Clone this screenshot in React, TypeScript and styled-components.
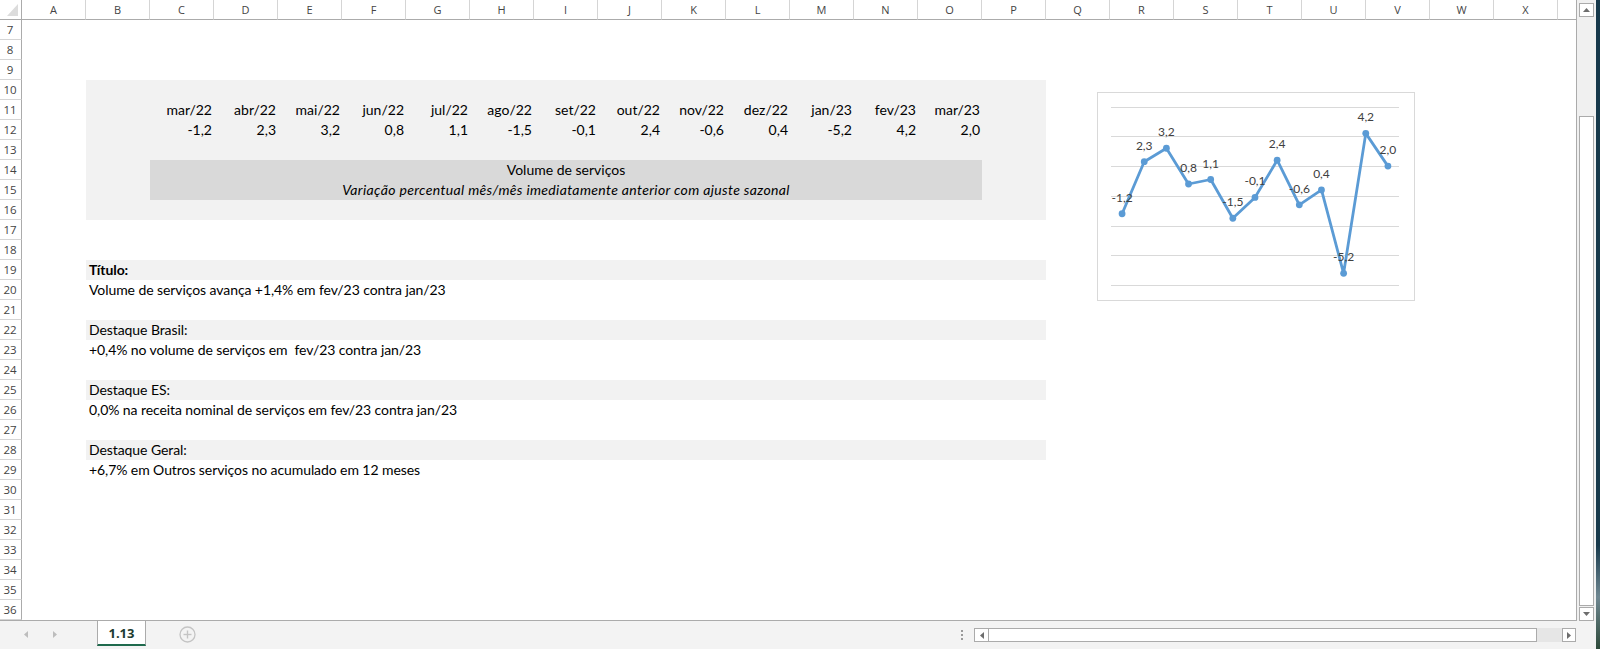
import React from "react";
import styled, { createGlobalStyle } from "styled-components";

const GlobalStyle = createGlobalStyle`
  html, body { margin: 0; padding: 0; background: #fff; }
  body { width: 1600px; height: 649px; overflow: hidden; font-family: "Lato", "Liberation Sans", sans-serif; }
  * { box-sizing: border-box; }
`;

const COLS = "ABCDEFGHIJKLMNOPQRSTUVWX".split("");
const ROWS = Array.from({ length: 30 }, (_, i) => i + 7);
const MONTHS = ["mar/22", "abr/22", "mai/22", "jun/22", "jul/22", "ago/22", "set/22", "out/22", "nov/22", "dez/22", "jan/23", "fev/23", "mar/23"];
const VALUES = [-1.2, 2.3, 3.2, 0.8, 1.1, -1.5, -0.1, 2.4, -0.6, 0.4, -5.2, 4.2, 2.0];
const fmt = (v: number) => v.toFixed(1).replace(".", ",");

const LINES: { row: number; text: string; shaded?: boolean; bold?: boolean }[] = [
  { row: 19, text: "Título:", shaded: true, bold: true },
  { row: 20, text: "Volume de serviços avança +1,4% em fev/23 contra jan/23" },
  { row: 22, text: "Destaque Brasil:", shaded: true },
  { row: 23, text: "+0,4% no volume de serviços em  fev/23 contra jan/23" },
  { row: 25, text: "Destaque ES:", shaded: true },
  { row: 26, text: "0,0% na receita nominal de serviços em fev/23 contra jan/23" },
  { row: 28, text: "Destaque Geral:", shaded: true },
  { row: 29, text: "+6,7% em Outros serviços no acumulado em 12 meses" },
];

const CELL_FONT = `"Lato", "Liberation Sans", sans-serif`;
const UI_FONT = `"Open Sans", "Noto Sans", sans-serif`;

const Screen = styled.div`
  display: flex;
  width: 1600px;
  height: 649px;
`;

const Window = styled.div`
  flex: 0 0 1596px;
  display: flex;
  flex-direction: column;
  background: #f3f3f3;
`;

const Desktop = styled.div`
  flex: 1;
  background: linear-gradient(to bottom, #17394b 0%, #17394b 84%, #6f8791 92%, #2e4a3a 100%);
`;

const Main = styled.div`
  display: flex;
  height: 621px;
`;

const Sheet = styled.div`
  position: relative;
  width: 1577px;
  height: 621px;
  background: #fff;
  border-right: 1px solid #ababab;
  border-bottom: 1px solid #ababab;
  display: grid;
  grid-template-columns: 22px repeat(24, 64px) 1fr;
  grid-template-rows: repeat(31, 20px);
`;

const Corner = styled.div`
  grid-column: 1;
  grid-row: 1;
  border-right: 1px solid #ababab;
  border-bottom: 1px solid #ababab;
  display: flex;
`;

const ColHeader = styled.div<{ $col: number }>`
  grid-column: ${(p) => p.$col};
  grid-row: 1;
  border-bottom: 1px solid #ababab;
  border-right: 1px solid #d5d5d5;
  font-family: ${UI_FONT};
  font-size: 11px;
  color: #444;
  display: flex;
  align-items: center;
  justify-content: center;
`;

const HeaderFiller = styled.div`
  grid-column: 26;
  grid-row: 1;
  border-bottom: 1px solid #ababab;
`;

const RowHeader = styled.div<{ $row: number }>`
  grid-column: 1;
  grid-row: ${(p) => p.$row};
  border-right: 1px solid #ababab;
  border-bottom: 1px solid #d5d5d5;
  font-family: ${UI_FONT};
  font-size: 11.5px;
  color: #444;
  display: flex;
  align-items: center;
  justify-content: center;
  padding-right: 1px;
`;

const GrayBlock = styled.div`
  grid-column: 3 / 18;
  grid-row: 5 / 12;
  background: #f2f2f2;
  display: grid;
  grid-template-columns: repeat(15, 64px);
  grid-template-rows: repeat(7, 20px);
  font-family: ${CELL_FONT};
  font-size: 14px;
  color: #000;
`;

const NumCell = styled.div<{ $row: number; $col: number }>`
  grid-row: ${(p) => p.$row};
  grid-column: ${(p) => p.$col};
  text-align: right;
  padding-right: 2px;
  line-height: 20px;
  white-space: nowrap;
`;

const TitleBox = styled.div`
  grid-column: 2 / 15;
  grid-row: 5 / 7;
  background: #d9d9d9;
  display: grid;
  grid-template-rows: 20px 20px;
  text-align: center;
  line-height: 20px;
`;

const Subtitle = styled.div`
  font-style: italic;
  letter-spacing: 0.35px;
`;

const Band = styled.div<{ $row: number; $shaded?: boolean; $bold?: boolean }>`
  grid-column: 3 / 18;
  grid-row: ${(p) => p.$row};
  background: ${(p) => (p.$shaded ? "#f2f2f2" : "transparent")};
  font-family: ${CELL_FONT};
  font-size: 14px;
  font-weight: ${(p) => (p.$bold ? 700 : 400)};
  letter-spacing: -0.08px;
  color: #000;
  line-height: 20px;
  padding-left: 3px;
  white-space: pre;
`;

const ChartFrame = styled.div`
  position: absolute;
  left: 1097px;
  top: 92px;
  width: 318px;
  height: 209px;
  background: #fff;
  border: 1px solid #d9d9d9;
`;

const VScroll = styled.div`
  flex: 0 0 19px;
  display: flex;
  flex-direction: column;
  padding: 3px 2px 0 2px;
  background: #f0f0f0;
`;

const ScrollButton = styled.div<{ $w?: number; $h?: number }>`
  flex: 0 0 auto;
  width: ${(p) => (p.$w ? `${p.$w}px` : "100%")};
  height: ${(p) => (p.$h ? `${p.$h}px` : "100%")};
  border: 1px solid #ababab;
  background: #fff;
  display: flex;
  align-items: center;
  justify-content: center;
`;

const VTrack = styled.div`
  flex: 0 0 99px;
`;

const VThumb = styled.div`
  flex: 0 0 490px;
  border: 1px solid #ababab;
  background: #fff;
  margin-bottom: 1px;
`;

const BottomBar = styled.div`
  flex: 1;
  display: flex;
  align-items: flex-start;
  background: #f3f3f3;
`;

const NavGroup = styled.div`
  width: 97px;
  height: 27px;
  display: flex;
  align-items: center;
  padding-left: 24px;
  gap: 25px;
`;

const SheetTab = styled.div`
  width: 49px;
  height: 25px;
  background: #fff;
  border-left: 1px solid #ababab;
  border-right: 1px solid #ababab;
  border-bottom: 2px solid #1f6a4d;
  font-family: ${UI_FONT};
  font-weight: 700;
  font-size: 13px;
  color: #1c3b30;
  display: flex;
  align-items: center;
  justify-content: center;
  padding-top: 1px;
`;

const AddButton = styled.div`
  margin-left: 33px;
  height: 27px;
  display: flex;
  align-items: center;
`;

const Spacer = styled.div`
  flex: 1;
`;

const Dots = styled.div`
  width: 8px;
  margin-right: 8px;
  height: 27px;
  display: flex;
  flex-direction: column;
  align-items: center;
  justify-content: center;
  gap: 2px;
`;

const Dot = styled.span`
  width: 2px;
  height: 2px;
  background: #9a9a9a;
`;

const HScroll = styled.div`
  width: 602px;
  height: 14px;
  margin-top: 7px;
  margin-right: 20px;
  display: flex;
`;

const HThumb = styled.div`
  flex: 0 0 548px;
  border: 1px solid #ababab;
  border-left: none;
  background: #fff;
`;

const HTrack = styled.div`
  flex: 0 0 25px;
  background: #e6e6e6;
`;

const Arrow = ({ dir, color = "#6d6d6d" }: { dir: "up" | "down" | "left" | "right"; color?: string }) => {
  const pts =
    dir === "up" ? "0,4 7,4 3.5,0" : dir === "down" ? "0,0 7,0 3.5,4" : dir === "left" ? "4,0 4,7 0,3.5" : "0,0 0,7 4,3.5";
  const w = dir === "up" || dir === "down" ? 7 : 4;
  const h = dir === "up" || dir === "down" ? 4 : 7;
  return (
    <svg width={w} height={h} viewBox={`0 0 ${w} ${h}`}>
      <polygon points={pts} fill={color} />
    </svg>
  );
};

const Chart = () => {
  const W = 316;
  const H = 207;
  const left = 13;
  const right = 301;
  const step = (right - left) / VALUES.length;
  const y = (v: number) => 102.9 - v * 14.89;
  const x = (i: number) => left + (i + 0.5) * step;
  const grid = [6, 4, 2, 0, -2, -4, -6];
  const pts = VALUES.map((v, i) => `${x(i).toFixed(1)},${y(v).toFixed(1)}`).join(" ");
  return (
    <svg width={W} height={H} viewBox={`0 0 ${W} ${H}`}>
      {grid.map((g) => (
        <line key={g} x1={left} x2={right} y1={Math.round(y(g)) + 0.5} y2={Math.round(y(g)) + 0.5} stroke="#d9d9d9" strokeWidth={1} />
      ))}
      <polyline points={pts} fill="none" stroke="#5b9bd5" strokeWidth={2.8} strokeLinejoin="round" strokeLinecap="round" />
      {VALUES.map((v, i) => (
        <circle key={i} cx={x(i)} cy={y(v)} r={3.4} fill="#5b9bd5" />
      ))}
      {VALUES.map((v, i) => (
        <text
          key={`t${i}`}
          x={x(i)}
          y={y(v) - 12}
          textAnchor="middle"
          fontFamily={CELL_FONT}
          fontSize={12}
          fill="#404040"
        >
          {fmt(v)}
        </text>
      ))}
    </svg>
  );
};

export default function App() {
  return (
    <>
      <GlobalStyle />
      <Screen>
        <Window>
          <Main>
            <Sheet>
              <Corner>
                <svg width={21} height={19} viewBox="0 0 21 19">
                  <polygon points="7,16 18,16 18,4" fill="#dcdcdc" />
                </svg>
              </Corner>
              {COLS.map((c, i) => (
                <ColHeader key={c} $col={i + 2}>
                  {c}
                </ColHeader>
              ))}
              <HeaderFiller />
              {ROWS.map((r) => (
                <RowHeader key={r} $row={r - 5}>
                  {r}
                </RowHeader>
              ))}
              <GrayBlock>
                {MONTHS.map((m, i) => (
                  <NumCell key={m} $row={2} $col={i + 2}>
                    {m}
                  </NumCell>
                ))}
                {VALUES.map((v, i) => (
                  <NumCell key={`v${i}`} $row={3} $col={i + 2}>
                    {fmt(v)}
                  </NumCell>
                ))}
                <TitleBox>
                  <div>Volume de serviços</div>
                  <Subtitle>Variação percentual mês/mês imediatamente anterior com ajuste sazonal</Subtitle>
                </TitleBox>
              </GrayBlock>
              {LINES.map((l) => (
                <Band key={l.row} $row={l.row - 5} $shaded={l.shaded} $bold={l.bold}>
                  {l.text}
                </Band>
              ))}
              <ChartFrame>
                <Chart />
              </ChartFrame>
            </Sheet>
            <VScroll>
              <ScrollButton $h={14}>
                <Arrow dir="up" />
              </ScrollButton>
              <VTrack />
              <VThumb />
              <ScrollButton $h={14}>
                <Arrow dir="down" />
              </ScrollButton>
            </VScroll>
          </Main>
          <BottomBar>
            <NavGroup>
              <Arrow dir="left" color="#bdbdbd" />
              <Arrow dir="right" color="#bdbdbd" />
            </NavGroup>
            <SheetTab>1.13</SheetTab>
            <AddButton>
              <svg width={17} height={17} viewBox="0 0 17 17">
                <circle cx={8.5} cy={8.5} r={7.5} fill="none" stroke="#c4c4c4" strokeWidth={1.3} />
                <line x1={8.5} x2={8.5} y1={4.5} y2={12.5} stroke="#c4c4c4" strokeWidth={1.4} />
                <line x1={4.5} x2={12.5} y1={8.5} y2={8.5} stroke="#c4c4c4" strokeWidth={1.4} />
              </svg>
            </AddButton>
            <Spacer />
            <Dots>
              <Dot />
              <Dot />
              <Dot />
            </Dots>
            <HScroll>
              <ScrollButton $w={15}>
                <Arrow dir="left" />
              </ScrollButton>
              <HThumb />
              <HTrack />
              <ScrollButton $w={14}>
                <Arrow dir="right" />
              </ScrollButton>
            </HScroll>
          </BottomBar>
        </Window>
        <Desktop />
      </Screen>
    </>
  );
}
